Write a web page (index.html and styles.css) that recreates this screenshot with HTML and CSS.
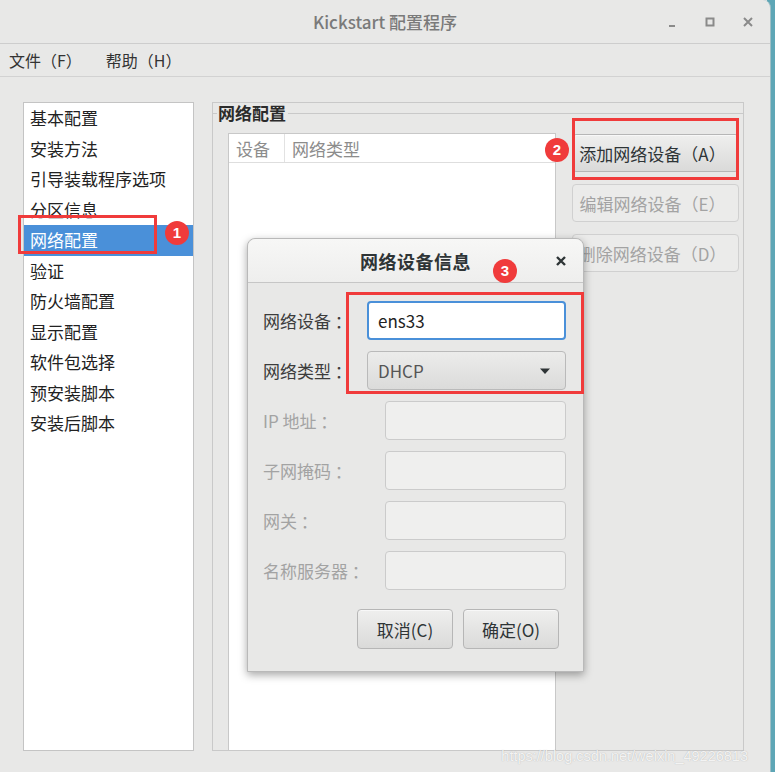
FILE: index.html
```html
<!DOCTYPE html>
<html lang="zh-CN">
<head>
  <meta charset="UTF-8">
  <meta name="viewport" content="width=device-width, initial-scale=1.0">
  <title>Kickstart 配置程序</title>
  <link rel="stylesheet" href="styles.css">
</head>
<body>
  <div class="window">
    <!-- Title bar -->
    <header class="titlebar">
      <span></span>
      <span class="title">Kickstart 配置程序</span>
      <div class="win-controls">
        <svg width="16" height="16" viewBox="0 0 16 16"><path d="M5 12h6" stroke="#8a8a8a" stroke-width="2"/></svg>
        <svg width="16" height="16" viewBox="0 0 16 16"><rect x="4.5" y="4.5" width="7" height="7" fill="none" stroke="#8a8a8a" stroke-width="2"/></svg>
        <svg width="16" height="16" viewBox="0 0 16 16"><path d="M4 4l8 8M12 4l-8 8" stroke="#8a8a8a" stroke-width="2"/></svg>
      </div>
    </header>

    <!-- Menu -->
    <nav class="menubar">
      <span class="menu-item">文件（F）</span>
      <span class="menu-item">帮助（H）</span>
    </nav>

    <main class="content">
      <ul class="sections">
        <li>基本配置</li>
        <li>安装方法</li>
        <li>引导装载程序选项</li>
        <li>分区信息</li>
        <li class="selected">网络配置</li>
        <li>验证</li>
        <li>防火墙配置</li>
        <li>显示配置</li>
        <li>软件包选择</li>
        <li>预安装脚本</li>
        <li>安装后脚本</li>
      </ul>

      <section class="frame">
        <div class="frame-legend"><span>网络配置</span></div>
        <div class="frame-body">
          <div class="tree">
            <div class="tree-head">
              <span class="col-dev">设备</span>
              <span class="col-type">网络类型</span>
            </div>
          </div>
          <div class="actions">
            <button class="btn">添加网络设备（A）</button>
            <button class="btn" disabled>编辑网络设备（E）</button>
            <button class="btn" disabled>删除网络设备（D）</button>
          </div>
        </div>
      </section>
    </main>

    <!-- Dialog -->
    <div class="dialog">
      <div class="dialog-title">
        <span>网络设备信息</span>
        <svg class="dialog-close" width="14" height="14" viewBox="0 0 14 14"><path d="M3 3l8 8M11 3l-8 8" stroke="#2e3436" stroke-width="2.4"/></svg>
      </div>
      <div class="dialog-body">
        <div class="form-grid">
          <label>网络设备 ：</label>
          <div class="entry focus">ens33</div>
          <label>网络类型 ：</label>
          <div class="combo">
            <span>DHCP</span>
            <svg width="12" height="8" viewBox="0 0 12 8"><path d="M1 1.5h10L6 7z" fill="#2e3436"/></svg>
          </div>
          <label class="off">IP 地址 ：</label>
          <div class="entry off"></div>
          <label class="off">子网掩码 ：</label>
          <div class="entry off"></div>
          <label class="off">网关 ：</label>
          <div class="entry off"></div>
          <label class="off">名称服务器 ：</label>
          <div class="entry off"></div>
        </div>
        <div class="dialog-buttons">
          <button class="btn">取消(C)</button>
          <button class="btn">确定(O)</button>
        </div>
      </div>
    </div>

    <!-- Annotations -->
    <div class="mark mark-1"></div>
    <div class="mark mark-2"></div>
    <div class="mark mark-3"></div>
    <span class="badge badge-1">1</span>
    <span class="badge badge-2">2</span>
    <span class="badge badge-3">3</span>

    <span class="watermark">https://blog.csdn.net/weixin_49226813</span>
  </div>
</body>
</html>
```

FILE: styles.css
```css
:root {
  --win-bg: #e8e8e7;
  --border: #c4c4c4;
  --text: #2e3436;
  --text-off: #a3a3a3;
  --select: #4a90d9;
  --mark: #f03b3b;
}

body {
  margin: 0;
  padding: 0;
  background: linear-gradient(90deg, #e8e8e7 0%, #e8e8e7 99%, #5ea6b6 99%);
  font-family: "Noto Sans CJK SC", "Noto Sans", sans-serif;
  color: var(--text);
  overflow: hidden;
}

.window {
  position: relative;
  width: 771px;
  height: 772px;
  background: var(--win-bg);
  border-right: 1px solid #9fbfc6;
  border-top-right-radius: 8px;
  display: flex;
  flex-direction: column;
  box-sizing: border-box;
}

/* Title bar */
.titlebar {
  height: 43px;
  display: grid;
  grid-template-columns: 1fr auto 1fr;
  align-items: center;
  border-bottom: 1px solid #cdcdcd;
  flex-shrink: 0;
}

.title {
  font-size: 17px;
  color: #7a7a7a;
  font-weight: 500;
}

.win-controls {
  display: flex;
  justify-content: flex-end;
  gap: 22px;
  padding-right: 14px;
}

/* Menu bar */
.menubar {
  height: 32px;
  display: flex;
  align-items: center;
  border-bottom: 1px solid #d2d2d2;
  padding-left: 9px;
  flex-shrink: 0;
}

.menu-item {
  font-size: 16px;
  line-height: 20px;
  color: #333;
  margin-right: 24px;
}

/* Main content */
.content {
  flex: 1;
  display: flex;
  gap: 18px;
  padding: 25px 27px 21px 23px;
  min-height: 0;
}

.sections {
  list-style: none;
  margin: 0;
  padding: 0;
  width: 169px;
  background: #fff;
  border: 1px solid var(--border);
  flex-shrink: 0;
}

.sections li {
  font-size: 17px;
  line-height: 30.5px;
  height: 30.5px;
  padding-left: 6px;
  color: #222;
}

.sections li.selected {
  background: var(--select);
  color: #fff;
}

.frame {
  flex: 1;
  border: 1px solid #c9c9c9;
  display: flex;
  flex-direction: column;
}

.frame-legend {
  height: 20px;
  display: flex;
  align-items: center;
  font-size: 17px;
  line-height: 20px;
  font-weight: 700;
  color: #2b2b2b;
}

.frame-legend::before {
  content: "";
  width: 4px;
  border-top: 1px solid #c9c9c9;
  margin-right: 1px;
}

.frame-legend::after {
  content: "";
  flex: 1;
  border-top: 1px solid #c9c9c9;
  margin-left: 2px;
}

.frame-body {
  flex: 1;
  display: flex;
  gap: 16px;
  margin-top: 10px;
  padding: 0 4px 0 15px;
}

.tree {
  width: 326px;
  background: #fff;
  border: 1px solid #c8c8c8;
  border-bottom: none;
}

.tree-head {
  height: 28px;
  display: flex;
  border-bottom: 1px solid #dedede;
  font-size: 17px;
  color: #8c8c8c;
}

.tree-head span {
  display: flex;
  align-items: center;
  padding: 0 7px;
}

.col-dev {
  width: 41px;
  border-right: 1px solid #e2e2e2;
}

.actions {
  width: 167px;
  display: flex;
  flex-direction: column;
  gap: 12px;
  padding-top: 1px;
}

.btn {
  height: 38px;
  font-family: inherit;
  font-size: 17px;
  color: var(--text);
  border: 1px solid #b6b6b6;
  border-radius: 4px;
  background: linear-gradient(#efefee, #dadad9);
  box-shadow: inset 0 1px 0 #f8f8f8;
  padding: 0 6px 0 0;
  cursor: pointer;
}

.btn:disabled {
  color: var(--text-off);
  background: #ebebea;
  border-color: #d0d0d0;
  box-shadow: none;
}

/* Dialog */
.dialog {
  position: absolute;
  left: 247px;
  top: 238px;
  width: 337px;
  height: 434px;
  box-sizing: border-box;
  background: var(--win-bg);
  border: 1px solid #b9b9b9;
  border-radius: 8px 8px 0 0;
  box-shadow: 0 3px 9px rgba(0, 0, 0, 0.35);
}

.dialog-title {
  position: relative;
  height: 43px;
  display: flex;
  align-items: center;
  justify-content: center;
  background: linear-gradient(#f7f7f6, #eeeeed);
  border-bottom: 1px solid #c6c6c6;
  border-radius: 8px 8px 0 0;
  font-size: 18px;
  font-weight: 700;
  letter-spacing: 0.5px;
  color: var(--text);
}

.dialog-close {
  position: absolute;
  right: 15px;
  top: 15px;
}

.dialog-body {
  padding: 18px 17px 0 15px;
}

.form-grid {
  display: grid;
  grid-template-columns: 104px 1fr;
  row-gap: 11px;
  align-items: center;
}

.form-grid label {
  font-size: 17px;
  color: #3c3c3c;
  white-space: nowrap;
}

.form-grid label.off {
  color: var(--text-off);
}

.entry,
.combo {
  height: 39px;
  box-sizing: border-box;
  border-radius: 4px;
  font-size: 17px;
}

.entry {
  background: #fff;
  border: 1px solid #c2c2c2;
  padding-left: 10px;
  display: flex;
  align-items: center;
}

.entry.focus {
  border: 2px solid var(--select);
  padding-left: 9px;
  color: #222;
}

.entry.off {
  background: #efefee;
  border-color: #cbcbcb;
  margin-left: 18px;
}

.combo {
  display: flex;
  align-items: center;
  justify-content: space-between;
  padding: 0 14px 0 10px;
  border: 1px solid #bababa;
  background: linear-gradient(#ececeb, #dbdbda);
  color: #555;
}

.dialog-buttons {
  display: flex;
  justify-content: flex-end;
  gap: 10px;
  margin-top: 19px;
  margin-right: 7px;
}

.dialog-buttons .btn {
  width: 96px;
  height: 40px;
  padding: 0;
}

/* Annotations */
.mark {
  position: absolute;
  border: 3px solid var(--mark);
  box-sizing: border-box;
}

.mark-1 { left: 18px; top: 215px; width: 139px; height: 39px; }
.mark-2 { left: 572px; top: 118px; width: 167px; height: 62px; }
.mark-3 { left: 346px; top: 292px; width: 238px; height: 102px; }

.badge {
  position: absolute;
  width: 24px;
  height: 24px;
  border-radius: 50%;
  background: var(--mark);
  color: #fff;
  font-family: "Liberation Sans", sans-serif;
  font-size: 15px;
  font-weight: 700;
  line-height: 24px;
  text-align: center;
}

.badge-1 { left: 165px; top: 221px; }
.badge-2 { left: 545px; top: 138px; }
.badge-3 { left: 493px; top: 259px; }

.watermark {
  position: absolute;
  right: 22px;
  bottom: 8px;
  font-family: "Liberation Sans", sans-serif;
  font-size: 14.5px;
  color: rgba(255, 255, 255, 0.85);
  text-shadow: 0 0 1px rgba(110, 110, 110, 0.5);
}
```
